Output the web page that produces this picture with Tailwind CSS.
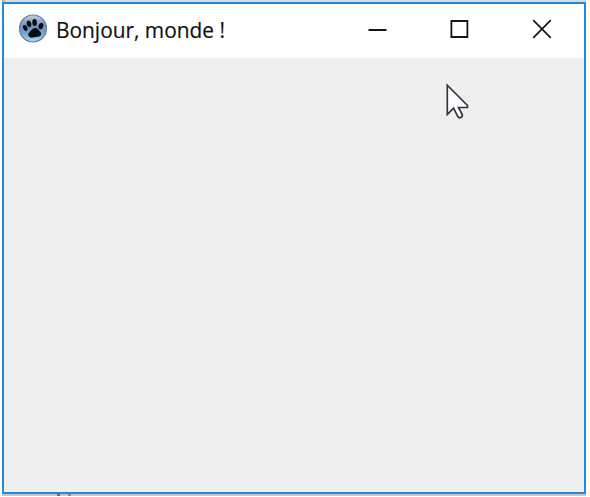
<!DOCTYPE html>
<html lang="fr">
<head>
<meta charset="utf-8">
<title>Bonjour, monde !</title>
<script src="https://cdn.jsdelivr.net/npm/@tailwindcss/browser@4"></script>
</head>
<body class="bg-white w-[590px] h-[497px] overflow-hidden">
<div class="flex w-[586px] h-[497px] flex-col pl-[2px]">
  <div class="flex h-[2px] shrink-0 bg-[#d5dbe0]"><span class="w-[3px] bg-[#d9b77b]"></span></div>
  <main class="relative flex h-[492px] shrink-0 flex-col border-2 border-[#2488dc] bg-[#efefef]">
    <header class="flex h-[54px] shrink-0 items-center bg-white pb-[4px] pl-[14px] pr-[32px]">
      <svg class="h-[30px] w-[30px] shrink-0" viewBox="0 0 30 30">
        <defs><linearGradient id="ball" x1="0" y1="0" x2="0" y2="1"><stop offset="0" stop-color="#c3cbe0"/><stop offset=".4" stop-color="#7191bd"/><stop offset=".7" stop-color="#6fa6da"/><stop offset="1" stop-color="#a9e2fb"/></linearGradient></defs>
        <circle cx="15" cy="14.5" r="13.5" fill="url(#ball)" stroke="#6f7c92" stroke-width="1.2"/>
        <g fill="#080c13"><ellipse cx="7.3" cy="14" rx="2" ry="3" transform="rotate(-28 7.3 14)"/><ellipse cx="11" cy="9.8" rx="2.2" ry="3.4" transform="rotate(-12 11 9.8)"/><ellipse cx="16.6" cy="8.4" rx="2.3" ry="3.5" transform="rotate(-4 16.6 8.4)"/><ellipse cx="22.9" cy="12" rx="2.3" ry="3.3" transform="rotate(18 22.9 12)"/><path d="M16.6 14.1c2.7-.3 3.4 1.4 4.8 2.8 2.9 2 1.9 5.7-1.4 5.8-2 .1-3 .3-4.7.9-4.5.7-6.5-2.7-3.9-5.3 1.9-1.4 2.5-3.8 5.2-4.2Z"/></g>
      </svg>
      <svg class="ml-[7px] h-[40px] w-[180px] shrink-0" viewBox="0 0 180 40"><text x="1" y="28.5" textLength="169" lengthAdjust="spacingAndGlyphs" fill="#111" stroke="#111" stroke-width=".2" class="font-['Open_Sans',sans-serif] text-[22px]">Bonjour, monde !</text></svg>
      <div class="ml-auto flex items-center gap-[62px] text-[#151515]">
        <svg class="h-5 w-5" viewBox="0 0 20 20"><path d="M.5 11h18" stroke="currentColor" stroke-width="2"/></svg>
        <svg class="h-5 w-5" viewBox="0 0 20 20" fill="none"><path d="M1.4 2h16v16h-16Z" stroke="currentColor" stroke-width="1.8"/></svg>
        <svg class="h-5 w-5" viewBox="0 0 20 20"><path d="m1.2 1.2 17.6 17.6M18.8 1.2 1.2 18.8" stroke="currentColor" stroke-width="1.7"/></svg>
      </div>
    </header>
    <svg class="absolute left-[441px] top-[79px] h-[38px] w-[26px]" viewBox="0 0 26 38"><path d="M2.3 2.2v29.2l6.3-6.2 4.2 8.4q1.4 2 3.5.6 1.7-1 .7-3l-3.5-6.7h9v-2Z" fill="#fff" stroke="#343441" stroke-width="1.7"/></svg>
  </main>
  <div class="flex h-[2px] shrink-0 bg-[#c6c9cc]"><span class="ml-[55px] w-[3px] bg-[#68717a]"></span><span class="ml-[8px] w-[3px] bg-[#858c94]"></span></div>
</div>
</body>
</html>
